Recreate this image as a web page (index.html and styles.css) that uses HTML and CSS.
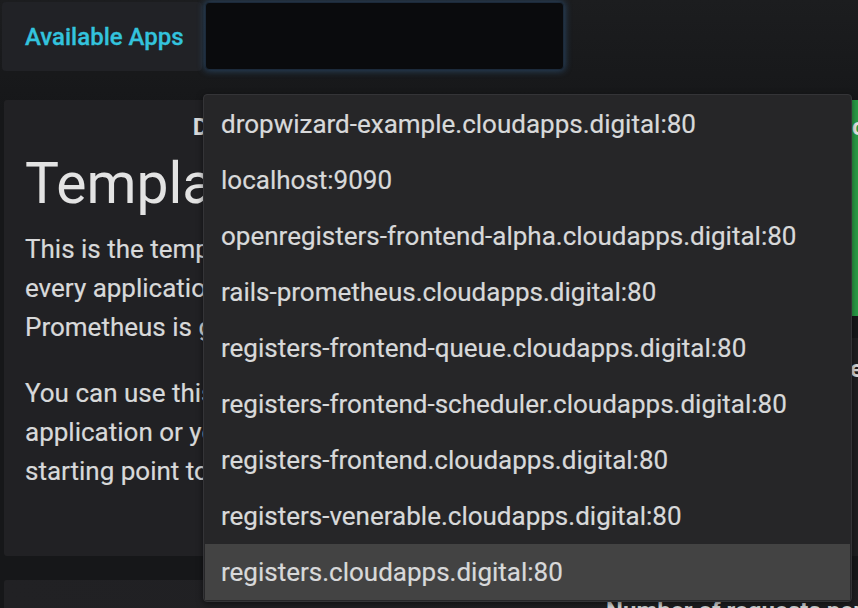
FILE: index.html
```html
<!DOCTYPE html>
<html lang="en">
<head>
<meta charset="utf-8">
<title>Template dashboard</title>
<link rel="stylesheet" href="styles.css">
</head>
<body>
<div class="submenu">
  <div class="var-label">Available Apps</div>
  <div class="var-input"></div>
</div>

<main class="dashboard">
  <section class="panel text-panel">
    <h3 class="panel-title">Details</h3>
    <h1 class="text-heading">Template dashboard</h1>
    <p>This is the template dashboard for<br>every application whose metrics<br>Prometheus is gathering.</p>
    <p>You can use this to monitor your<br>application or you can copy it as a<br>starting point to build your own.</p>
  </section>

  <div class="col-right">
    <section class="panel stat-panel">
      <h3 class="panel-title stat-title">ok</h3>
    </section>
    <section class="panel graph-panel">
      <h3 class="panel-title graph-title">e</h3>
    </section>
  </div>

  <section class="panel bottom-panel">
    <h3 class="panel-title bottom-title">Number of requests per second</h3>
  </section>
</main>

<ul class="dropdown">
  <li class="option">dropwizard-example.cloudapps.digital:80</li>
  <li class="option">localhost:9090</li>
  <li class="option">openregisters-frontend-alpha.cloudapps.digital:80</li>
  <li class="option">rails-prometheus.cloudapps.digital:80</li>
  <li class="option">registers-frontend-queue.cloudapps.digital:80</li>
  <li class="option">registers-frontend-scheduler.cloudapps.digital:80</li>
  <li class="option">registers-frontend.cloudapps.digital:80</li>
  <li class="option">registers-venerable.cloudapps.digital:80</li>
  <li class="option active">registers.cloudapps.digital:80</li>
</ul>
</body>
</html>
```

FILE: styles.css
```css
* {
  box-sizing: border-box;
}

html, body {
  margin: 0;
  padding: 0;
  height: 100%;
}

body {
  background: linear-gradient(#1c1d1f 0px, #161719 110px) #161719;
  color: #d8d9da;
  font-family: Roboto, "Liberation Sans", sans-serif;
  overflow: hidden;
  position: relative;
}

/* ---------- template variable row ---------- */
.submenu {
  display: flex;
  gap: 3px;
  padding: 2px 0 0 2px;
  height: 71px;
}

.var-label {
  width: 200px;
  height: 69px;
  background: #212226;
  border-radius: 4px;
  color: #33c3dd;
  font-size: 24px;
  font-weight: 500;
  display: flex;
  align-items: center;
  padding-left: 23px;
  -webkit-text-stroke: 0.3px #33c3dd;
}

.var-input {
  width: 359px;
  height: 68px;
  background: #0a0b0d;
  border: 1px solid #1c2a3a;
  border-radius: 4px;
  box-shadow: 0 0 7px 1px rgba(60, 120, 180, 0.45);
}

/* ---------- dashboard grid ---------- */
.dashboard {
  display: grid;
  grid-template-columns: 452px 600px;
  grid-template-rows: 456px 200px;
  column-gap: 8px;
  row-gap: 24px;
  padding: 29px 0 0 4px;
}

.panel {
  background: #212124;
  border-radius: 3px;
  overflow: hidden;
}

.panel-title {
  margin: 0;
  font-size: 24px;
  line-height: 24px;
  font-weight: 700;
  color: #d8d9da;
}

.text-panel {
  padding: 15px 21px 0 21px;
}

.text-panel .panel-title {
  text-align: center;
}

.text-heading {
  margin: 13px 0 15px 0;
  font-size: 57px;
  line-height: 63px;
  font-weight: 400;
  color: #e3e3e3;
  white-space: nowrap;
}

.text-panel p {
  margin: 0 0 27px 0;
  font-size: 26px;
  line-height: 39px;
  white-space: nowrap;
  -webkit-text-stroke: 0.2px #d8d9da;
}

.col-right {
  display: flex;
  flex-direction: column;
  gap: 22px;
}

.stat-panel {
  height: 216px;
  background: #299c46;
  padding: 15px 0 0 388px;
}

.stat-title {
  color: #e8e8e8;
}

.graph-panel {
  flex: 1;
  background: #1f1f21;
  padding: 19px 0 0 386px;
}

.bottom-panel {
  grid-column: 1 / 3;
  padding: 19px 0 0 602px;
  background: linear-gradient(90deg, #212124, #1e1e20);
}

.bottom-title {
  white-space: nowrap;
}

/* ---------- open dropdown ---------- */
.dropdown {
  position: absolute;
  left: 203px;
  top: 94px;
  width: 649px;
  margin: 0;
  padding: 1px;
  list-style: none;
  background: #262628;
  border: 1px solid #343437;
  border-radius: 4px;
  box-shadow: 0 2px 6px rgba(0, 0, 0, 0.5);
}

.option {
  height: 56px;
  line-height: 56px;
  padding-left: 16px;
  font-size: 26px;
  color: #d8d9da;
  white-space: nowrap;
  -webkit-text-stroke: 0.2px #d8d9da;
}

.option.active {
  background: #434343;
}
```
